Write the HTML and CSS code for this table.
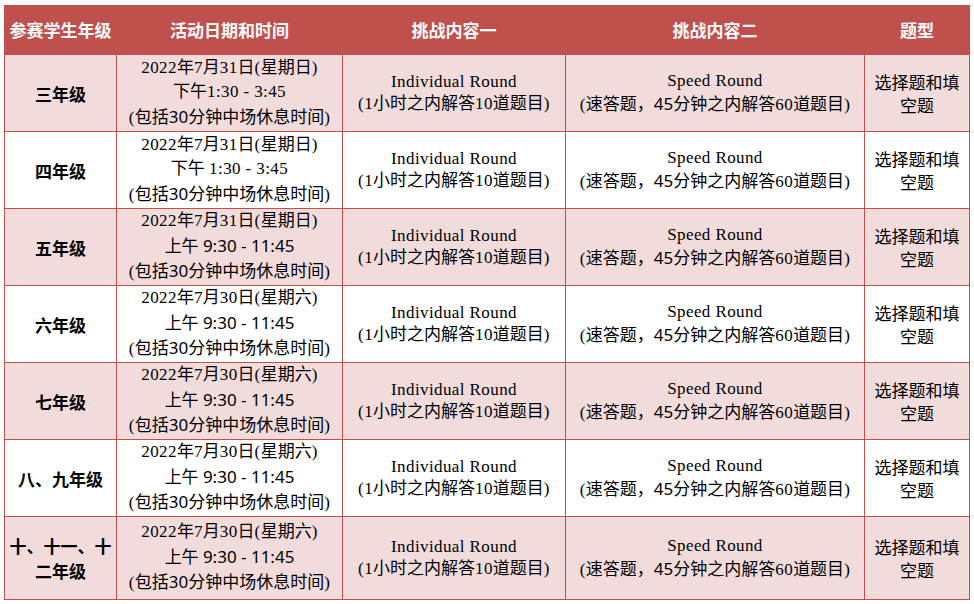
FILE: index.html
```html
<!DOCTYPE html>
<html lang="zh">
<head>
<meta charset="utf-8">
<title>比赛安排</title>
<link rel="stylesheet" href="styles.css">
</head>
<body>
<div class="wrap">
<table class="sched">
  <colgroup>
    <col class="c1"><col class="c2"><col class="c3"><col class="c4"><col class="c5">
  </colgroup>
  <thead>
    <tr><th>参赛学生年级</th><th>活动日期和时间</th><th>挑战内容一</th><th>挑战内容二</th><th>题型</th></tr>
  </thead>
  <tbody>
    <tr class="shade">
      <td class="grade">三年级</td>
      <td class="date"><span class="en">2022</span>年<span class="en">7</span>月<span class="en">31</span>日<span class="en">(</span>星期日<span class="en">)</span><br>下午<span class="en">1:30 - 3:45</span><br><span class="en">(</span>包括<span class="sans">30</span>分钟中场休息时间<span class="en">)</span></td>
      <td class="ch"><span class="en">Individual Round</span><br><span class="en">(1</span>小时之内解答<span class="en">10</span>道题目<span class="en">)</span></td>
      <td class="ch"><span class="en">Speed Round</span><br><span class="en">(</span>速答题<span class="cm">，</span><span class="sans">45</span>分钟之内解答<span class="en">60</span>道题目<span class="en">)</span></td>
      <td class="type">选择题和填空题</td>
    </tr>
    <tr>
      <td class="grade">四年级</td>
      <td class="date"><span class="en">2022</span>年<span class="en">7</span>月<span class="en">31</span>日<span class="en">(</span>星期日<span class="en">)</span><br>下午 <span class="en">1:30 - 3:45</span><br><span class="en">(</span>包括<span class="sans">30</span>分钟中场休息时间<span class="en">)</span></td>
      <td class="ch"><span class="en">Individual Round</span><br><span class="en">(1</span>小时之内解答<span class="en">10</span>道题目<span class="en">)</span></td>
      <td class="ch"><span class="en">Speed Round</span><br><span class="en">(</span>速答题<span class="cm">，</span><span class="sans">45</span>分钟之内解答<span class="en">60</span>道题目<span class="en">)</span></td>
      <td class="type">选择题和填空题</td>
    </tr>
    <tr class="shade">
      <td class="grade">五年级</td>
      <td class="date"><span class="en">2022</span>年<span class="en">7</span>月<span class="en">31</span>日<span class="en">(</span>星期日<span class="en">)</span><br>上午 <span class="sans">9:30 - 11:45</span><br><span class="en">(</span>包括<span class="sans">30</span>分钟中场休息时间<span class="en">)</span></td>
      <td class="ch"><span class="en">Individual Round</span><br><span class="en">(1</span>小时之内解答<span class="en">10</span>道题目<span class="en">)</span></td>
      <td class="ch"><span class="en">Speed Round</span><br><span class="en">(</span>速答题<span class="cm">，</span><span class="sans">45</span>分钟之内解答<span class="en">60</span>道题目<span class="en">)</span></td>
      <td class="type">选择题和填空题</td>
    </tr>
    <tr>
      <td class="grade">六年级</td>
      <td class="date"><span class="en">2022</span>年<span class="en">7</span>月<span class="en">30</span>日<span class="en">(</span>星期六<span class="en">)</span><br>上午 <span class="sans">9:30 - 11:45</span><br><span class="en">(</span>包括<span class="sans">30</span>分钟中场休息时间<span class="en">)</span></td>
      <td class="ch"><span class="en">Individual Round</span><br><span class="en">(1</span>小时之内解答<span class="en">10</span>道题目<span class="en">)</span></td>
      <td class="ch"><span class="en">Speed Round</span><br><span class="en">(</span>速答题<span class="cm">，</span><span class="sans">45</span>分钟之内解答<span class="en">60</span>道题目<span class="en">)</span></td>
      <td class="type">选择题和填空题</td>
    </tr>
    <tr class="shade">
      <td class="grade">七年级</td>
      <td class="date"><span class="en">2022</span>年<span class="en">7</span>月<span class="en">30</span>日<span class="en">(</span>星期六<span class="en">)</span><br>上午 <span class="sans">9:30 - 11:45</span><br><span class="en">(</span>包括<span class="sans">30</span>分钟中场休息时间<span class="en">)</span></td>
      <td class="ch"><span class="en">Individual Round</span><br><span class="en">(1</span>小时之内解答<span class="en">10</span>道题目<span class="en">)</span></td>
      <td class="ch"><span class="en">Speed Round</span><br><span class="en">(</span>速答题<span class="cm">，</span><span class="sans">45</span>分钟之内解答<span class="en">60</span>道题目<span class="en">)</span></td>
      <td class="type">选择题和填空题</td>
    </tr>
    <tr>
      <td class="grade">八、九年级</td>
      <td class="date"><span class="en">2022</span>年<span class="en">7</span>月<span class="en">30</span>日<span class="en">(</span>星期六<span class="en">)</span><br>上午 <span class="sans">9:30 - 11:45</span><br><span class="en">(</span>包括<span class="sans">30</span>分钟中场休息时间<span class="en">)</span></td>
      <td class="ch"><span class="en">Individual Round</span><br><span class="en">(1</span>小时之内解答<span class="en">10</span>道题目<span class="en">)</span></td>
      <td class="ch"><span class="en">Speed Round</span><br><span class="en">(</span>速答题<span class="cm">，</span><span class="sans">45</span>分钟之内解答<span class="en">60</span>道题目<span class="en">)</span></td>
      <td class="type">选择题和填空题</td>
    </tr>
    <tr class="shade last">
      <td class="grade">十、十一、十二年级</td>
      <td class="date"><span class="en">2022</span>年<span class="en">7</span>月<span class="en">30</span>日<span class="en">(</span>星期六<span class="en">)</span><br>上午 <span class="sans">9:30 - 11:45</span><br><span class="en">(</span>包括<span class="sans">30</span>分钟中场休息时间<span class="en">)</span></td>
      <td class="ch"><span class="en">Individual Round</span><br><span class="en">(1</span>小时之内解答<span class="en">10</span>道题目<span class="en">)</span></td>
      <td class="ch"><span class="en">Speed Round</span><br><span class="en">(</span>速答题<span class="cm">，</span><span class="sans">45</span>分钟之内解答<span class="en">60</span>道题目<span class="en">)</span></td>
      <td class="type">选择题和填空题</td>
    </tr>
  </tbody>
</table>
</div>
</body>
</html>
```
FILE: styles.css
```css
html, body {
  margin: 0;
  padding: 0;
  background: #ffffff;
}

body {
  font-family: "Liberation Serif", "Noto Sans CJK SC", serif;
  font-size: 17px;
  color: #000000;
}

.wrap {
  padding: 5px 0 0 4px;
}

.sched {
  border-collapse: collapse;
  table-layout: fixed;
  width: 965px;
}

.c1 { width: 112px; }
.c2 { width: 226px; }
.c3 { width: 223px; }
.c4 { width: 299px; }
.c5 { width: 105px; }

.sched th,
.sched td {
  border: 1px solid #c0504d;
  text-align: center;
  vertical-align: middle;
  padding: 0 6px;
}

.sched th {
  background: #c0504d;
  color: #ffffff;
  font-family: "Noto Sans CJK SC", sans-serif;
  font-weight: 700;
  font-size: 17px;
  height: 48px;
  line-height: 24px;
  padding: 0;
  white-space: nowrap;
}

.sched tbody tr {
  height: 77px;
}

.sched tbody tr.last {
  height: 83px;
}

.sched tr.shade td {
  background: #f2dcdb;
}

.sched td.grade {
  font-family: "Noto Sans CJK SC", sans-serif;
  font-weight: 700;
  line-height: 25px;
  padding: 0 4px;
  line-break: anywhere;
}

.date {
  line-height: 24.5px;
}

.ch {
  line-height: 22.5px;
}

.cm {
  font-family: "Noto Sans CJK SC", sans-serif;
}

.type {
  font-family: "Noto Sans CJK SC", sans-serif;
  line-height: 23px;
}

.en {
  font-family: "Liberation Serif", serif;
  letter-spacing: 0.4px;
}

.sans {
  font-family: "Noto Sans", "Noto Sans CJK SC", sans-serif;
}
```
